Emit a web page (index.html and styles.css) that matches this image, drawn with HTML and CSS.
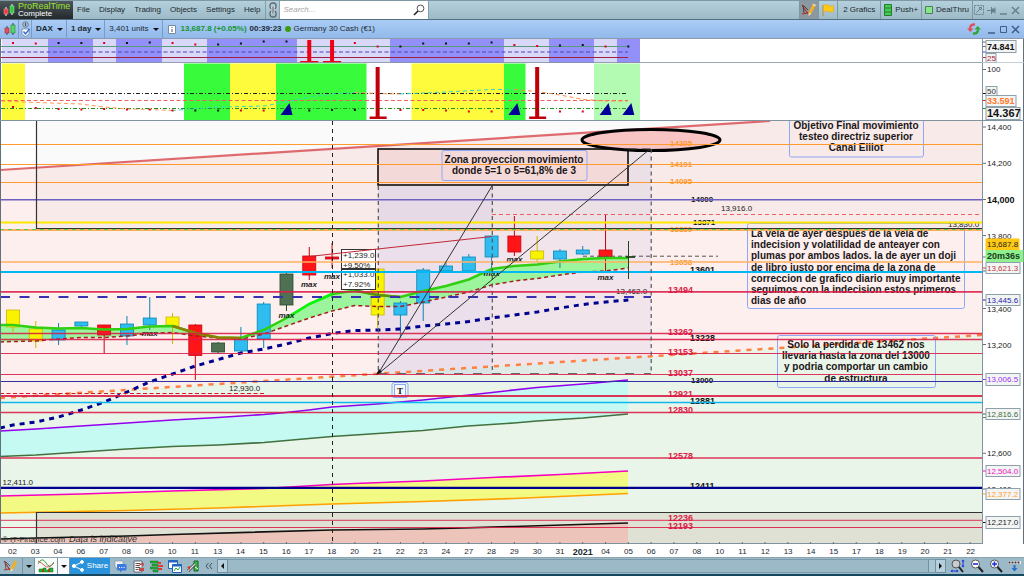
FILE: index.html
```html
<!DOCTYPE html>
<html lang="es">
<head>
<meta charset="utf-8">
<meta name="viewport" content="width=device-width, initial-scale=1">
<title>ProRealTime - DAX</title>
<link rel="stylesheet" href="styles.css">
</head>
<body>
<header class="menubar">
  <div class="brand">
    <svg class="brand-icon" viewBox="0 0 12 13"><path d="M3 3v9M9 0v11" stroke="#fff" stroke-width="1"/><rect x="1" y="5" width="4" height="5" fill="#e0404a" stroke="#ff9a9a" stroke-width=".5"/><rect x="7" y="2" width="4" height="7" fill="#2fc840" stroke="#a8f0a0" stroke-width=".5"/></svg>
    <div class="brand-text"><span class="brand-name">ProRealTime</span><span>Complete</span></div>
  </div>
  <nav class="menu">
    <button>File</button><button>Display</button><button>Trading</button><button>Objects</button><button>Settings</button><button>Help</button>
  </nav>
  <button class="link-button" aria-label="Link"><svg viewBox="0 0 8 16" width="8" height="16" fill="none" stroke="#5f696f" stroke-width="1.300"><rect x="1" y="1" width="6" height="6" rx="2.500"/><rect x="1" y="9" width="6" height="6" rx="2.500"/><path d="M4 4.500v7" stroke="#eef3f5" stroke-width="3"/><path d="M4 4.500v7"/></svg></button>
  <div class="search"><input type="search" placeholder="Search..." aria-label="Search"><svg viewBox="0 0 12 12" width="12" height="12" fill="none" stroke="#555"><circle cx="7.500" cy="4.400" r="3.400"/><path d="M5 7L1 11" stroke="#222" stroke-width="1.600"/></svg></div>
  <div class="tools">
    <button class="tool pressed" aria-label="Draw"><svg viewBox="0 0 16 14" width="16" height="14" fill="none"><path d="M1 2l6 9M1 11l6-1" stroke="#b03028" stroke-width="1.200"/><path d="M2 2l1 8M3 3l4 4" stroke="#444"/><path d="M9 10l4-8" stroke="#efb024" stroke-width="3"/><path d="M7.500 13l.3-3.500 2.600 1.300z" fill="#f6dca8"/><path d="M13 2.500l.6-1.200" stroke="#f4e6d0" stroke-width="3"/></svg></button>
    <button class="tool" aria-label="Flag"><svg viewBox="0 0 12 12" width="12" height="12"><path d="M1 1v11" stroke="#b88a30"/><path d="M1.500 1q3-1 5 .5t5 0v6q-3 1-5 0t-5 0z" fill="#ffc91c" stroke="#e8a010" stroke-width=".5"/></svg></button>
    <button class="tool wide">2 Grafics</button>
    <button class="tool"><svg viewBox="0 0 8 12" width="8" height="12"><path d="M.5.500h7v11h-7zM.5 4h7M.5 8h7" fill="#3fcf4c" stroke="#287838"/></svg>Push+</button>
    <button class="tool"><svg viewBox="0 0 8 8" width="8" height="8"><path d="M.5.500h7v7h-7z" fill="#86e886" stroke="#4f7f5a"/></svg>DealThru</button>
    <button class="tool dim" aria-label="Tools"><svg viewBox="0 0 10 10" width="10" height="10" fill="none" stroke="#64818f"><path d="M.5.500h9v9h-9z" stroke-dasharray="2 1"/><path d="M2.500 7.500L6 4M5 3l2 2M5 2.500h2.500v2"/></svg></button>
    <button class="win" aria-label="Pin"><svg viewBox="0 0 9 9" width="9" height="9" stroke="#64818f"><path d="M0 4.500h4M4.500 1v7M4.500 3h3v3h-3M8 1.500v6" fill="#64818f"/></svg></button>
    <button class="win" aria-label="Minimise"><svg viewBox="0 0 9 9" width="9" height="9" stroke="#64818f"><path d="M1 8h7" stroke-width="1.500"/></svg></button>
    <button class="win" aria-label="Close"><svg viewBox="0 0 9 9" width="9" height="9" stroke="#64818f"><path d="M1 1l7 7M8 1L1 8" stroke-width="1.500"/></svg></button>
  </div>
</header>

<div class="chartbar">
  <button class="cell candle-cell" aria-label="Chart style"><svg viewBox="0 0 12 13" width="12" height="13"><path d="M3 3v9M9 0v12" stroke="#345"/><rect x="1" y="5" width="4" height="5" fill="#e8505a" stroke="#8c2028" stroke-width=".5"/><rect x="7" y="2" width="4" height="8" fill="#58d860" stroke="#187020" stroke-width=".5"/></svg></button>
  <button class="cell check-cell" aria-label="Link chart"><svg viewBox="0 0 9 16" width="9" height="16" fill="none"><circle cx="4.500" cy="3.500" r="2.800" fill="#a8b8c8" stroke="#6f8090"/><path d="M4.500 2v3" stroke="#456"/><path d="M1 8h7v5L4.500 15.500 1 13z" fill="#fff" stroke="#6f8090" stroke-width=".7"/><path d="M2.500 10.500l2 2.500 4-5" stroke="#2868d8" stroke-width="1.400"/></svg></button>
  <button class="cell strong">DAX<i class="caret"></i></button>
  <button class="cell strong">1 day<i class="caret"></i></button>
  <button class="cell">3,401 units<i class="caret"></i></button>
  <div class="quote">
    <svg viewBox="0 0 8 9" width="8" height="9"><path d="M.5.500h7v8h-7z" fill="#fff" stroke="#7a8c9c"/><path d="M4 2v1M4 4v3" stroke="#456"/></svg>
    <span class="up">13,687.8 (+0.05%)</span><span class="clock">00:39:23</span><i class="dot"></i><span>Germany 30 Cash (€1)</span>
  </div>
  <div class="window-buttons">
    <svg viewBox="0 0 14 12" width="14" height="12" fill="none" stroke-width="2.400"><path d="M8 1.500Q3 1 3 6" stroke="#e05058"/><path d="M0 5.500h6.500L3.300 9z" fill="#e05058"/><path d="M6 10.500q5 .5 5-4" stroke="#28a830"/><path d="M7.500 6.500H14L10.700 3z" fill="#28a830"/></svg>
    <button class="win" aria-label="Minimise chart"><svg viewBox="0 0 9 9" width="9" height="9" stroke="#3d5f86"><path d="M1 8h7" stroke-width="1.500"/></svg></button>
    <button class="win" aria-label="Maximise chart"><svg viewBox="0 0 9 9" width="9" height="9" stroke="#3d5f86" fill="none"><path d="M1.500 1.500h6v6h-6z"/></svg></button>
    <button class="win" aria-label="Close chart"><svg viewBox="0 0 9 9" width="9" height="9" stroke="#3d5f86"><path d="M1 1l7 7M8 1L1 8" stroke-width="1.500"/></svg></button>
  </div>
</div>

<main class="charts">
  <section class="panel">
    <svg id="osc1" viewBox="0 39 982 24"></svg>
    <svg id="axis1" viewBox="982 39 42 24"></svg>
  </section>
  <section class="panel">
    <svg id="osc2" viewBox="0 63 982 58"></svg>
    <svg id="axis2" viewBox="982 63 42 58"></svg>
  </section>
  <section class="panel">
    <svg id="price" viewBox="0 121 982 423"></svg>
    <svg id="axis3" viewBox="982 121 42 423"></svg>
  </section>
  <ol class="dates" id="dates"></ol>
</main>

<footer class="bottombar">
  <button class="foot" aria-label="Drawing tools"><svg viewBox="0 0 16 14" width="16" height="14" fill="none"><path d="M1 2l6 9M1 11l6-1" stroke="#b03028" stroke-width="1.200"/><path d="M2 2l1 8M3 3l4 4" stroke="#556"/><path d="M9 10l4-8" stroke="#efb024" stroke-width="3"/><path d="M7.500 13l.3-3.500 2.600 1.300z" fill="#f6dca8"/></svg></button>
  <button class="foot drop" aria-label="More drawing tools"><i class="caret"></i></button>
  <button class="foot light" aria-label="Indicators"><svg viewBox="0 0 16 14" width="16" height="14" fill="none"><path d="M0 5Q4-3 8 4t8-1" stroke="#38a838"/><path d="M0 2q4 2 7 5t9-3" stroke="#d05850"/><path d="M1 13v-3h4V9h3v2h3V9h4v4z" fill="#18b828" stroke="#187020" stroke-width=".5"/><path d="M5 10v3M11 10v3" stroke="#d02020" stroke-width="1.500"/></svg></button>
  <button class="foot drop light" aria-label="More indicators"><i class="caret"></i></button>
  <button class="share"><svg viewBox="0 0 12 12" width="12" height="12" stroke="#fff" fill="#fff"><path d="M10 2L2 6l8 4" fill="none"/><circle cx="10" cy="2" r="1.400"/><circle cx="2" cy="6" r="1.600"/><circle cx="10" cy="10" r="1.400"/></svg>Share</button>
  <div class="foot-icons">
    <button aria-label="Chat"><svg viewBox="0 0 13 13" width="13" height="13"><path d="M1 1h8v6H4L2 9V7H1z" fill="#eef2f5" stroke="#8a98a4" stroke-width=".7"/><path d="M3 5q0-1 1-1h7q1.500 0 1.500 1.500v4q0 1-1.500 1H8L6 12.500v-2H4q-1 0-1-1z" fill="#3c7ae0"/><path d="M5 7.500h1M7.300 7.500h1M9.600 7.500h1" stroke="#fff"/></svg></button>
    <button aria-label="News"><svg viewBox="0 0 13 13" width="13" height="13"><path d="M2 1h8v11H2z" fill="#fff" stroke="#667"/><path d="M3.500 3.500h5M3.500 5.500h4M3.500 7.500h5M3.500 9.500h3" stroke="#555"/><path d="M6 6l5-3M11 3v3" stroke="#c22"/><path d="M7 8h5v3H7z" fill="#c84848"/></svg></button>
    <button aria-label="Order book"><svg viewBox="0 0 13 13" width="13" height="13"><path d="M0 1h8v2H0zM2 4h6v2H2zM0 7h8v2H0zM3 10h5v2H3z" fill="#24b034" stroke="#165c20" stroke-width=".4"/><path d="M8 2h3v2H8zM8 5h5v2H8zM8 8h4v2H8z" fill="#e03838"/></svg></button>
    <button aria-label="Windows"><svg viewBox="0 0 14 13" width="14" height="13"><path d="M.5.500h9v8h-9z" fill="#fff" stroke="#2464c0"/><path d="M0 1.500h10" stroke="#2464c0" stroke-width="2"/><path d="M4.500 4.500h9v8h-9z" fill="#fff" stroke="#2464c0"/><path d="M4 5.500h10" stroke="#2464c0" stroke-width="2"/><path d="M6 11l2-3 2 2 2-3" fill="none" stroke="#2a4"/></svg></button>
    <button aria-label="Settings"><svg viewBox="0 0 13 13" width="13" height="13" fill="none"><path d="M7 1h4v10H7z" fill="#35bb45" stroke="#176022"/><path d="M1 11l7-7" stroke="#444" stroke-width="3"/><path d="M1 11l7-7" stroke="#ddd" stroke-width="1.300"/><path d="M0 7l3-1v4z" fill="#d33"/><path d="M8 7l3 2" stroke="#fff"/></svg></button>
    <button class="collapse" aria-label="Collapse"><svg viewBox="0 0 8 8" width="8" height="8" fill="none" stroke="#3c5866"><path d="M3.500 1L1 4l2.500 3M7 1L4.500 4 7 7"/></svg></button>
  </div>
  <div class="scroller">
    <button class="scroll-button" aria-label="Scroll left"><i class="arrow left"></i></button>
    <div class="track"><div class="thumb"></div></div>
    <button class="scroll-button" aria-label="Scroll right"><i class="arrow right"></i></button>
  </div>
  <div class="zoom">
    <button aria-label="Fit"><svg viewBox="0 0 15 14" width="15" height="14" fill="none"><circle cx="6" cy="5" r="4" fill="#c8ccd0" stroke="#555"/><path d="M9 8l4 5" stroke="#222" stroke-width="2"/><path d="M13 1v7M1 12h7" stroke="#1c30e0"/><path d="M11.500 2.500L13 .5l1.500 2M11.500 6.500L13 8.500l1.500-2M2.500 10.500L.5 12l2 1.500M6.500 10.500L8.500 12l-2 1.500" fill="#1c30e0"/></svg></button>
    <button aria-label="Zoom out"><svg viewBox="0 0 14 14" width="14" height="14" fill="none"><circle cx="5.500" cy="5" r="4" fill="#fff" stroke="#555"/><path d="M8.500 8l4.500 5" stroke="#222" stroke-width="2"/><path d="M3 5h5" stroke="#1c30e0" stroke-width="1.600"/></svg></button>
    <button aria-label="Zoom in"><svg viewBox="0 0 14 14" width="14" height="14" fill="none"><circle cx="5.500" cy="5" r="4" fill="#fff" stroke="#555"/><path d="M8.500 8l4.500 5" stroke="#222" stroke-width="2"/><path d="M3 5h5M5.500 2.500v5" stroke="#1c30e0" stroke-width="1.600"/></svg></button>
    <button aria-label="Go to last"><svg viewBox="0 0 13 12" width="13" height="12"><path d="M0 1h13v3H0z" fill="#f4f4f4"/><path d="M.5 2.500h12" stroke="#333" stroke-width="2" stroke-dasharray="2 1"/><path d="M6.500 5v5" stroke="#2a6cd0" stroke-width="2"/><path d="M3.500 8h6l-3 3.500z" fill="#2a6cd0"/></svg></button>
  </div>
</footer>
<script src="script.js"></script>
</body>
</html>
```
FILE: styles.css
```css
* { box-sizing: border-box; }

body {
  margin: 0;
  min-height: 100vh;
  display: flex;
  flex-direction: column;
  background: #fff;
  color: #1c2930;
  font-family: "Liberation Sans", Arial, sans-serif;
  font-size: 8px;
  line-height: 10px;
}

button, input { font: inherit; color: inherit; }

button {
  display: flex;
  align-items: center;
  justify-content: center;
  margin: 0;
  padding: 0;
  border: 0;
  background: none;
}

svg { display: block; flex: none; }

/* Menu bar */
.menubar {
  display: flex;
  height: 20px;
  border-top: 1px solid #7f98a4;
  border-bottom: 1px solid #53707f;
  background: linear-gradient(#b3d0dc, #9ebac6);
}

.brand {
  display: flex;
  align-items: center;
  gap: 3px;
  width: 73px;
  padding-left: 3px;
  background: linear-gradient(#4c565b, #23292d);
  color: #fff;
}

.brand-icon { width: 12px; height: 13px; }
.brand-text { display: flex; flex-direction: column; line-height: 8px; }
.brand-name { color: #9be22d; font-size: 9px; }

.menu {
  display: flex;
  align-items: center;
  gap: 9px;
  padding: 0 5px 0 4px;
}

.link-button {
  width: 15px;
  border-left: 1px solid #849fac;
  border-right: 1px solid #849fac;
}

.search {
  display: flex;
  align-items: center;
  width: 149px;
  padding: 0 3px;
  background: #fff;
  border-right: 1px solid #849fac;
}

.search input {
  flex: 1;
  min-width: 0;
  padding: 0;
  border: 0;
  outline: 0;
  background: none;
}

.search input::placeholder { color: #a5a5a5; font-style: italic; }

.tools { display: flex; margin-left: auto; padding-right: 3px; }

.tool {
  gap: 3px;
  padding: 0 3px;
  border-left: 1px solid #7d98a5;
}

.tool.wide { padding: 0 5px; }
.tool.pressed { padding: 0 1px; background: #8c989f; }
.tool.dim { padding: 0 1px; }
.win { width: 12px; }

/* Instrument bar */
.chartbar {
  display: flex;
  height: 19px;
  border-bottom: 1px solid #8a9bb0;
  background: linear-gradient(#abccf6, #92b9ea);
}

.cell {
  gap: 4px;
  padding: 0 3px 0 4px;
  border-right: 1px solid #7d9cc4;
}

.candle-cell { width: 19px; }
.check-cell { width: 13px; padding: 0 1px; }
.strong { font-weight: bold; }

.caret {
  border: 3px solid transparent;
  border-top-color: #111;
  border-bottom: 0;
}

.quote { display: flex; align-items: center; gap: 3px; padding-left: 5px; }
.quote .up { margin-left: 2px; color: #15952f; font-weight: bold; }
.clock { font-weight: bold; }
.dot { width: 6px; height: 6px; border-radius: 50%; background: #3f9c10; }

.window-buttons {
  display: flex;
  align-items: center;
  margin-left: auto;
  padding-right: 3px;
}

.window-buttons > svg { margin-right: 4px; }

/* Chart panels */
.panel { display: grid; grid-template-columns: 982fr 42fr; }
.panel svg { width: 100%; height: auto; overflow: hidden; }

.bold { font-weight: bold; }
.max { font-weight: bold; font-style: italic; }
.note { font-size: 10px; font-weight: bold; }
.stamp { font-style: italic; font-size: 9px; }

.dates {
  display: grid;
  grid-template-columns: repeat(43, 1fr);
  width: 96%;
  margin: 0;
  padding: 3px 1px 0;
  height: 13px;
  list-style: none;
}

.dates li { display: flex; justify-content: center; white-space: nowrap; }
.year { font-weight: bold; font-size: 9px; }

/* Bottom bar */
.bottombar {
  display: flex;
  height: 19px;
  margin-top: auto;
  border-top: 1px solid #8aa4b2;
  border-bottom: 2px solid #184860;
  background: #9cb9c7;
}

.foot { width: 23px; border-right: 1px solid #7893a1; }
.foot.drop { width: 12px; }
.foot.light { background: #f8fafb; }

.share {
  gap: 3px;
  width: 40px;
  background: #2a93dc;
  color: #fff;
}

.foot-icons { display: flex; gap: 5px; padding: 0 4px; }

.scroller { display: flex; flex: 1; padding: 1px 0; }
.scroll-button { width: 11px; border: 1px solid #7390a0; background: #b5d0dc; }
.track {
  display: flex;
  flex: 1;
  justify-content: flex-end;
  border: solid #7d9aa9;
  border-width: 1px 0;
}
.thumb { width: 7px; border-left: 1px solid #7390a0; background: #a9c6d3; }
.arrow { border: 3px solid transparent; }
.arrow.left { border-right-color: #111; border-left: 0; }
.arrow.right { border-left-color: #111; border-right: 0; }

.zoom { display: flex; gap: 5px; padding: 0 3px 0 4px; }
```
FILE: script.js
```js
const X0 = 13, STEP = 22.79;
const xAt = i => X0 + STEP * i;
const RED = '#dc1c46', ORANGE = '#ff9a2e';
const put = (id, html) => { document.getElementById(id).innerHTML = html.join(''); };

const attrs = o => Object.entries(o || {}).map(([k, v]) => ` ${k}="${v}"`).join('');
const rect = (x, y, w, h, fill, o) => `<rect x="${x}" y="${y}" width="${w}" height="${h}" fill="${fill}"${attrs(o)}/>`;
const line = (x1, y1, x2, y2, stroke, width = 1, o) =>
  `<line x1="${x1}" y1="${y1}" x2="${x2}" y2="${y2}" stroke="${stroke}" stroke-width="${width}"${attrs(o)}/>`;
const poly = (points, stroke, width = 1, o) =>
  `<polyline points="${points}" fill="none" stroke="${stroke}" stroke-width="${width}"${attrs(o)}/>`;
const area = (points, fill) => `<polygon points="${points}" fill="${fill}"/>`;
const text = (x, y, s, fill = '#222', o) => `<text x="${x}" y="${y}" fill="${fill}"${attrs(o)}>${s}</text>`;
const dash = d => ({ 'stroke-dasharray': d });
const series = ys => ys.map((y, i) => [xAt(i), y]);
const flat = pts => pts.map(p => p.join(',')).join(' ');
const triangle = i => area(`${xAt(i) - 6},115 ${xAt(i) + 6},115 ${xAt(i) + 3},103`, '#000099');

/* First oscillator */
const o1 = [rect(2, 39, 638, 24, '#dad8f9')];
[[48, 93], [116, 162], [207, 297], [390, 504], [549, 594], [617, 640]].forEach(([a, b]) => o1.push(rect(a, 39, b - a, 24, '#9391f9')));
o1.push(line(1, 46.5, 628, 46.5, '#5a9a7c'), line(1, 52, 628, 52, '#4b46b8', 1, dash('4 2.5')), line(1, 57.5, 628, 57.5, '#a02040'));
const dots1 = ['43r', '43.5r', '43k', '43k', '43r', '43k', '42.5k', '43r', '44.5r', '44.5k', '43.5k', '41.5k', '41.5k', '', '', '43r', '46.5r', '46.5k', '43.5k', '43.5k', '43.5k', '42.5k', '45r', '46r', '45.5k', '45k', '46.5r', '46.5k'];
const addDots = (list, out) => list.forEach((d, i) => {
  if (d) out.push(rect(xAt(i) - 1, parseFloat(d) - 1, 2, 2, d.endsWith('r') ? '#e00018' : '#111'));
});
addDots(dots1, o1);
[13, 14].forEach(i => o1.push(rect(xAt(i) - 2, 40, 4, 21, '#f00014'), rect(xAt(i) - 9, 61, 18, 2, '#f00014')));
o1.push(line(0.5, 39, 0.5, 63, '#60717b'), line(0, 62.7, 982, 62.7, '#8293a0'));
put('osc1', o1);

/* Second oscillator */
const o2 = [];
[[2, 25, '#fdfb3c'], [184, 230, '#38fb3c'], [230, 276, '#fdfb3c'], [276, 366.5, '#38fb3c'], [411.5, 504, '#fdfb3c'], [504, 525.5, '#38fb3c'], [594, 640, '#b3fbb3']]
  .forEach(([a, b, c]) => o2.push(rect(a, 63.5, b - a, 57, c)));
o2.push(line(1, 93.5, 628, 93.5, '#222', 1, dash('4 2 1 2')), line(1, 100.5, 628, 100.5, '#f06060', 1, dash('4 2.5')), line(1, 108.5, 628, 108.5, '#20901e', 1, dash('4 2 1 2')));
o2.push(poly('1,101 36,102.5 81,104 104,107 127,109 150,109.5 172,110.5', '#ff9a50', 1, dash('4 3')),
  poly('172,110.5 218,107 264,106 286,102 309,97 332,94 355,92.5', '#38d8c0', 1, dash('4 3')),
  poly('355,92.5 377,93.5 400,94', '#ff9a50', 1, dash('4 3')),
  poly('400,94 446,92 492,89.5 514,89.5', '#38d8c0', 1, dash('4 3')),
  poly('514,89.5 537,91.5 560,95 583,99.5 605,101 628,101', '#ff8a40', 1, dash('4 3')));
addDots(['107r', '108r', '109r', '109.5r', '109r', '109.5r', '109.5r', '110.5r', '110.5k', '110.5k', '110.5r', '110.5r', '', '110.5k', '110k', '110k', '', '110r', '110r', '110.5r', '111.5r', '111.5r', '', '', '111.5r', '111.5r'], o2);
[12, 22, 26, 27].forEach(i => o2.push(triangle(i)));
[16, 23].forEach(i => o2.push(rect(xAt(i) - 2, 67, 4, 50, '#c00008'), rect(xAt(i) - 8, 116.5, 17, 2.5, '#c00008')));
o2.push(line(0.5, 63, 0.5, 121, '#60717b'), line(0, 120.5, 982, 120.5, '#8293a0'));
put('osc2', o2);

/* Price panel */
const p = [];
const ma = series([325, 327.5, 328.5, 328, 329.5, 329, 326.5, 326, 333, 337.5, 338, 330, 318, 304, 294, 290.5, 295, 297, 291, 286, 279.5, 269, 266, 264.5, 261.5, 259, 258, 258]);
const stop = series([341.5, 341, 339, 337.5, 337.5, 336, 333.5, 332.5, 336, 338, 339, 334, 326, 318, 311, 305.5, 306.5, 306.5, 302, 297, 292, 285, 281, 278.5, 275, 272, 271, 268]);
ma.unshift([0, 325]); stop.unshift([0, 342]);
const purple = '0,431 36,429 81,426 127,423 172,420 218,417.5 264,414.5 286,412.5 309,410 332,407 377,404 423,400 469,395 492,392.5 537,387.5 583,384 628,380';
const forest = '0,456.5 36,455 81,452 127,449 172,446.5 218,445 264,442.5 309,438.5 332,436.5 355,435 400,432 423,430.5 468,426 514,423 537,421 583,418 628,414';
const pink = '0,496 81,494 172,491 264,488.5 332,484.5 355,483.5 423,481 492,477.5 560,474.5 628,471';
const amber = '0,513 127,510.5 218,508 332,504 423,501.5 514,498.5 628,493.5';
const black = '0,539 36,538 127,536 172,534.5 332,530 423,529 514,526.5 628,523';
const back = s => s.split(' ').reverse().join(' ');

p.push(rect(0, 121, 982, 423, '#fff'), area('0,170 770,121 982,121 982,544 0,544', '#fcefee'), area('0,398 982,335 982,544 0,544', '#eaf5e9'));
p.push(rect(36, 121, 946, 107, '#000', { opacity: .02 }), rect(378, 186, 273, 188, '#8080d8', { opacity: .09 }), rect(378, 149, 250, 36, '#e08080', { opacity: .16 }), rect(628, 149, 23, 37, '#8080d8', { opacity: .09 }), rect(378, 186, 114, 188, '#8080d8', { opacity: .06 }));
p.push(area(`${purple} ${back(forest)}`, '#c5faf2'), area(`${pink} ${back(amber)}`, '#f3fa84'), rect(36, 512, 946, 32, '#b09080', { opacity: .2 }), area(`${black} 628,544 0,544`, '#edc4b9'));
p.push(area(flat(ma) + ' ' + flat([...stop].reverse()), '#9cf49c'));

const candles = [
  ['y', 310, 327, 310, 332], ['y', 329, 341, 321, 348], ['b', 330, 340, 323, 345], ['b', 322, 326, 322, 328], ['r', 325, 335, 325, 353],
  ['b', 324, 336, 316, 345], ['b', 318, 325, 297, 330], ['y', 317, 326, 313, 344], ['r', 325, 355.5, 324, 380], ['g', 343, 352, 342, 354],
  ['b', 339, 351, 327, 351], ['b', 304, 339, 302, 348], ['g', 274, 305, 273, 311], ['r', 256, 275, 247, 280], ['r', 257, 259, 243, 268],
  null, ['y', 269, 315, 269, 328], ['b', 303, 315, 301, 338], ['b', 270, 303, 268, 321], ['b', 266, 271, 261, 273], ['b', 257, 271, 254, 272],
  ['b', 236, 257, 236, 271], ['r', 236, 252, 216, 256], ['y', 251, 259, 236, 262], ['b', 251, 259, 249, 268], ['b', 250, 254, 246, 255], ['r', 250, 257, 215, 272]
];
const skin = { y: ['#f8f400', '#cdb800'], b: ['#2fbcf0', '#0a86b4'], r: ['#ff1418', '#c80010'], g: ['#4f7052', '#294a2c'] };
candles.forEach((c, i) => {
  if (!c) return;
  const [fill, edge] = skin[c[0]];
  p.push(line(xAt(i), c[3], xAt(i), c[4], edge), rect(xAt(i) - 6.5, c[1], 13, c[2] - c[1], fill, { stroke: edge, 'stroke-width': .8 }));
});

p.push(poly(flat(stop), '#a02020', 1.5, dash('4 3')));
p.push(poly(flat(ma), '#30d010', 2.5), poly(flat(ma.slice(13, 16)), '#08f808', 2.5), poly(flat(ma.slice(8, 12)), '#8c8000', 2.5), poly(flat(ma.slice(16, 19)), '#5c9410', 2.5));
p.push(line(0, 170, 770, 121, '#dc5c60', 2.2, { opacity: .9 }));
p.push(poly(purple, '#9400ee', 1.7), poly(forest, '#42703f', 1.7), poly(pink, '#f800c0', 1.7), poly(amber, '#ffa000', 1.7), poly(black, '#111', 1.7));
p.push(poly('0,398 982,335', '#ff8040', 2.5, dash('5 6')));
p.push(poly('0,428 ' + flat(series([425, 422, 417, 410, 402, 392, 382, 374, 366, 359.5, 353, 349, 344, 338, 333.5, 330.5, 330, 329, 326, 324, 321.5, 318, 315, 312, 308, 304.5, 302, 300])), '#000090', 3, dash('5 5')));

/* Annotations */
const frame = (x, y, w, h) => rect(x, y, w, h, 'none', { stroke: '#8ea8f8', rx: 2 });
const note = (x, y, rows, anchor) => rows.map((r, i) => text(x, y + i * 11.2, r, '#1c1618', { class: 'note', 'text-anchor': anchor })).join('');
p.push(frame(789.5, 116, 134, 41), note(856, 129, ['Objetivo Final movimiento', 'testeo directriz superior', 'Canal Elliot'], 'middle'));
p.push(frame(747.5, 223.5, 217, 85), note(751, 237, ['La vela de ayer despues de la vela de', 'indecision y volatilidad de anteayer con', 'plumas por ambos lados. la de ayer un doji', 'de libro justo por encima de la zona de', 'correccion de grafico diario muy importante', 'seguimos con la indecision estos primeros', 'dias de año'], 'start'));
p.push(frame(777.5, 335.5, 158, 52), note(856, 348, ['Solo la perdida de 13462 nos', 'llevaria hasta la zona del 13000', 'y podria comportar un cambio', 'de estructura'], 'middle'));

p.push(rect(378, 149, 250, 36, 'none', { stroke: '#000', 'stroke-width': 1.5 }));
p.push(frame(442, 150.5, 145, 30), note(514, 163, ['Zona proyeccion movimiento', 'donde 5=1 o 5=61,8% de 3'], 'middle'));
p.push('<ellipse cx="651" cy="140" rx="69" ry="10.5" fill="#f8c4c4" stroke="#000" stroke-width="3"/>');
p.push(frame(392, 382.5, 16, 15), rect(394.5, 384.5, 11, 11, '#f6f9ff', { stroke: '#8ea8f8' }), text(397, 393.5, 'T', '#111', { class: 'bold', 'font-family': 'Liberation Serif', 'font-size': 9 }));
[[286.5, 318], [309, 287], [332, 278.5], [605.5, 280], [514.4, 262], [491.6, 276], [149.7, 336]].forEach(([x, y]) => p.push(text(x, y, 'max', '#222', { class: 'max', 'text-anchor': 'middle' })));
p.push(rect(341.5, 249.5, 34, 19, '#fff', { stroke: '#333' }), text(343, 258, '+1,239.0'), text(343, 268, '+9.50%'));
p.push(rect(341.5, 269.5, 34, 20, '#fff', { stroke: '#333' }), text(343, 277, '+1,033.0'), text(343, 287, '+7.92%'));
p.push(text(721, 211, '13,916.0'), text(948, 227, '13,830.0'), text(616, 294, '13,462.0'), text(229, 391, '12,930.0'), text(2.5, 484.5, '12,411.0'));
p.push(text(2, 542, '© IT-Finance.com', '#333'), text(69, 542, 'Data is indicative', '#333', { class: 'stamp' }));

[[145.5, '14305'], [166.5, '14191'], [184, '14095'], [232, '13830'], [264.5, '13658']].forEach(([y, s]) => p.push(text(670, y, s, ORANGE, { class: 'bold' })));
[[293, '13494'], [335, '13262'], [354.5, '13153'], [376, '13037'], [396.5, '12921'], [413, '12830'], [458.5, '12578'], [521, '12236'], [529, '12193']].forEach(([y, s]) => p.push(text(668, y, s, RED, { class: 'bold', 'font-size': 9 })));
[[201.5, '14000', 8, 691], [224.5, '13871', 8, 693], [273, '13601', 9, 690], [340.5, '13228', 9, 690], [383, '13000', 8, 691], [403.5, '12881', 9, 690], [489, '12411', 9, 690]].forEach(([y, s, f, x]) => p.push(text(x, y, s, '#111', { class: 'bold', 'font-size': f })));

/* Levels */
const level = (y, c, w = 1, o) => line(0, y, 982, y, c, w, o);
p.push(level(144.5, ORANGE), level(164.5, ORANGE), level(182.5, ORANGE), level(199.7, '#6c60c0', 1.5), level(222.5, '#ffe600', 1.8), level(230, ORANGE, 1.5), level(229.5, '#50d050', 1, dash('4 4')), level(262, '#ffb060', 1.5), level(272, '#00b8f4', 1.8));
[[291.8, 1.8], [333.5, 1.5], [339.5, 1.5], [353.5, 1], [374.5, 1], [396, 2], [412.4, 1.5], [458, 1.5], [520.3, 1], [527.5, 1]].forEach(([y, w]) => p.push(level(y, RED, w, { opacity: .88 })));
p.push(level(381.5, '#3030a0'), level(402.5, '#10b8f0', 1.6), level(487.8, '#000090', 2.2));
p.push(line(0, 297, 651, 297, '#3830b0', 2, dash('10 9.5')), line(0, 393.5, 264, 393.5, '#d01828', 1, dash('4 2.5')), line(492, 214.5, 982, 214.5, '#f06060', 1, dash('4 3')), line(583, 256.2, 718, 256.2, '#555', 1, dash('4 3')));
p.push(poly('36.5,121 36.5,228.5 982,228.5', '#333', 1.2), poly('36.5,544 36.5,512.5 982,512.5', '#333', 1.2));
p.push(line(332.5, 121, 332.5, 544, '#222', 1, dash('4 4')));
[378.3, 492.3, 651.2].forEach((x, i) => p.push(line(x, i === 2 ? 149 : 186, x, 374, '#555', 1.2, dash('4 3.5'))));
p.push(line(378, 373.5, 651, 373.5, '#666', 1.2, dash('9 10')), line(628, 149, 651, 149, '#333', 1.2, dash('9 5')));
p.push(line(378, 374, 492, 186, '#333'), line(378, 374, 650, 149, '#333'), line(309, 256.5, 492, 236.5, '#c02838'));
p.push(line(628.5, 241, 628.5, 279, '#23401f'), line(626, 257, 635, 257, '#23401f', 1.8), area('376,375 382,372 379,369', '#111'));
p.push(line(0.5, 121, 0.5, 544, '#60717b'), line(0, 543.5, 982, 543.5, '#8293a0'));
for (let i = 0; i < 43; i++) p.push(line(xAt(i), 542, xAt(i), 544, '#60717b'));
put('price', p);

/* Value axes */
const tag = (y, h, w, s, color, o = {}) => rect(986, y, w, h, o.bg || '#f3f5f5', { stroke: o.edge || '#8fa0ab' }) +
  text(987, y + h / 2 + (o.size || 8) * .36, s, color, { 'font-size': o.size || 8, ...(o.bold ? { class: 'bold' } : {}) });
const edges = (a, b) => line(982.5, a, 982.5, b, '#8293a0') + line(1023.5, a, 1023.5, b, '#60717b');
const tick = (y, c = '#60717b') => line(983, y, 986, y, c);
put('axis1', [edges(39, 63), tick(42), tick(46.5), tick(52, '#5048c8'), tick(57.5, '#b02030'), tag(40.5, 12, 30, '74.841', '#111', { size: 9, bold: true }), tag(53.5, 9, 10, '25', '#b02030'), line(982, 62.7, 1024, 62.7, '#b8c4cc')]);
put('axis2', [edges(63, 121), tick(69.5), text(987, 72, '100'), tick(93.5, '#111'), tag(86.5, 9, 11, '50', '#333'), tick(100.5, '#f02020'), tag(95.5, 11, 30, '33.591', '#ff7828', { size: 9, bold: true }), tick(108.5, '#20901e'), tag(107.5, 12, 34, '14.367', '#111', { size: 11, bold: true }), line(982, 120.5, 1024, 120.5, '#8293a0')]);
const a3 = [edges(121, 544)];
[['14,400', 127], ['14,200', 163.3], ['13,800', 235.6], ['13,400', 308.5], ['13,200', 344.5], ['12,600', 453.3], ['12,400', 489]].forEach(([s, y]) => a3.push(tick(y), text(987, y + 3, s)));
a3.push(tick(199.5), text(987, 202.5, '14,000', '#111', { class: 'bold', 'font-size': 9 }), tick(257), tick(271), tick(417.5));
[[262.5, 11, '13,621.3', '#c03840'], [294.5, 11, '13,445.6', '#1c1ca8'], [373.5, 12, '13,006.5', '#a030f0'], [408.5, 11, '12,816.6', '#3f6f42'], [465.5, 11, '12,504.0', '#f010c0'], [488.5, 11, '12,377.2', '#ffa028'], [516.5, 12, '12,217.0', '#222']]
  .forEach(([y, h, s, c]) => a3.push(tick(y + h / 2, c), tag(y, h, 34, s, c)));
a3.push(tag(239, 11, 33, '13,687.8', '#222', { bg: '#ffc814', edge: '#ffc814' }), tag(250.5, 11, 37, '20m36s', '#163c18', { bg: '#90f090', edge: '#90f090', size: 9, bold: true }));
put('axis3', a3);

const days = '02 03 04 06 07 08 09 10 11 13 14 15 16 17 18 20 21 22 23 24 27 28 29 30 31 2021 04 05 06 07 08 10 11 12 13 14 15 17 18 19 20 21 22'.split(' ');
put('dates', days.map(d => `<li${d.length > 2 ? ' class="year"' : ''}>${d}</li>`));
```
